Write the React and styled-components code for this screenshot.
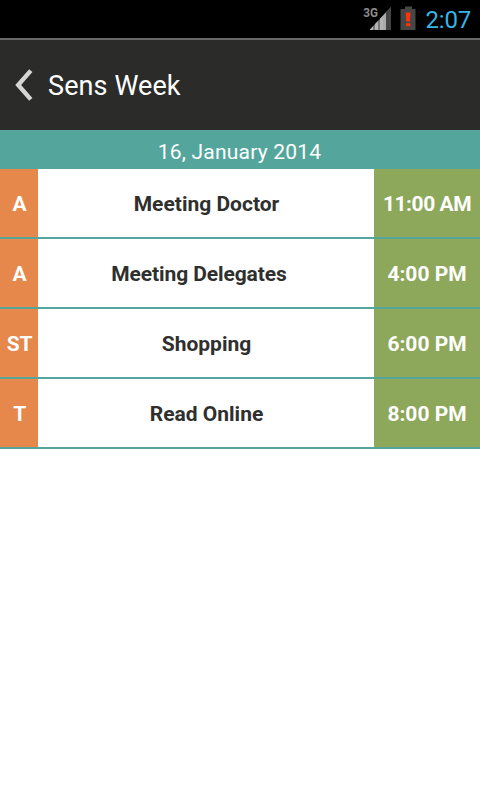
import React from 'react';
import styled, { createGlobalStyle } from 'styled-components';

const GlobalStyle = createGlobalStyle`
  body { margin: 0; background: #fff; font-family: Roboto, sans-serif; }
  * { box-sizing: border-box; }
`;

const Screen = styled.main`
  width: 480px;
  height: 800px;
  overflow: hidden;
  background: #fff;
`;

const StatusBar = styled.div`
  display: flex;
  justify-content: flex-end;
  height: 38px;
  padding-right: 9px;
  background: #000;
`;

const Signal = styled.svg`
  width: 28px;
  height: 38px;
  margin-right: 9px;
`;

const Battery = styled.svg`
  width: 16px;
  height: 38px;
  margin-right: 10px;
`;

const Clock = styled.time`
  color: #33b5e5;
  font-size: 24px;
  line-height: 40px;
  letter-spacing: -0.2px;
`;

const AppBar = styled.header`
  display: flex;
  align-items: center;
  height: 92px;
  padding-left: 15px;
  border-top: 2px solid #686868;
  background: #2b2c2a;
`;

const BackIcon = styled.svg`
  width: 18px;
  height: 34px;
  margin-right: 15px;
`;

const Title = styled.h1`
  margin: 0;
  padding-top: 2px;
  color: #fff;
  font-size: 27px;
  font-weight: 400;
  line-height: 32px;
  letter-spacing: 0.1px;
`;

const DateBar = styled.div`
  height: 39px;
  padding: 4px 1px 0 0;
  background: #54a69c;
  color: #fff;
  font-size: 21px;
  line-height: 37px;
  letter-spacing: 0.2px;
  text-align: center;
`;

const Row = styled.div`
  display: grid;
  grid-template-columns: 38px 336px 106px;
  height: 70px;
  border-bottom: 2px solid #54a69c;
`;

const Cell = styled.div`
  display: flex;
  align-items: center;
  justify-content: center;
  font-size: 21px;
  font-weight: 700;
  white-space: nowrap;
  padding-top: 1px;
`;

const Tag = styled(Cell)`
  padding-left: 1px;
  background: #e6884b;
  color: #fff;
  letter-spacing: -0.3px;
`;

const Name = styled(Cell)`
  padding-left: ${(p) => (p.$trailing ? 0 : 1)}px;
  padding-right: ${(p) => (p.$trailing || 0)}px;
  color: #2f302e;
  letter-spacing: ${(p) => (p.$trailing ? '-0.1px' : 'normal')};
`;

const Time = styled(Cell)`
  background: #8da75b;
  color: #fff;
  letter-spacing: ${(p) => (p.$wide ? '-0.45px' : 'normal')};
`;

const events = [
  { tag: 'A', name: 'Meeting Doctor', time: '11:00 AM' },
  { tag: 'A', name: 'Meeting Delegates', time: '4:00 PM', trailing: 14 },
  { tag: 'ST', name: 'Shopping', time: '6:00 PM' },
  { tag: 'T', name: 'Read Online', time: '8:00 PM' },
];

const NetworkLabel = styled.text`
  fill: #8c8c8c;
  font: 700 13.5px Roboto, sans-serif;
`;

export default function App() {
  return (
    <Screen>
      <GlobalStyle />
      <StatusBar>
        <Signal viewBox="0 0 28 38">
          <NetworkLabel x="0.3" y="17" textLength="14.7" lengthAdjust="spacingAndGlyphs">3G</NetworkLabel>
          <path d="M6.5 30 28 7v23z" fill="#777" />
          <path d="M6.5 30 10 26.3V30zM12 24.1l3-3.2V30h-3zM17 18.8l3-3.2V30h-3z" fill="#b4b4b4" />
          <path d="M20 15.6l3-3.2V30h-3z" fill="#aaa" />
          <path d="M23 12.4 28 7v23h-5z" fill="#444" />
        </Signal>
        <Battery viewBox="0 0 16 38">
          <path d="M5 6.5h7V9h3.5v21H.5V9H5z" fill="#464646" />
          <path d="M5.7 12.5h4.8l-.6 9H6.3zM6 23.3h4.3v3H6z" fill="#ff3208" />
        </Battery>
        <Clock>2:07</Clock>
      </StatusBar>
      <AppBar>
        <BackIcon viewBox="0 0 18 34">
          <path d="M15.8 2.6 3.2 17l12.6 14.4" fill="none" stroke="#d5d5d5" strokeWidth="4.4" />
        </BackIcon>
        <Title>Sens Week</Title>
      </AppBar>
      <DateBar>16, January 2014</DateBar>
      {events.map((e) => (
        <Row key={e.name}>
          <Tag>{e.tag}</Tag>
          <Name $trailing={e.trailing}>{e.name}</Name>
          <Time $wide={e.time.length > 7}>{e.time}</Time>
        </Row>
      ))}
    </Screen>
  );
}
